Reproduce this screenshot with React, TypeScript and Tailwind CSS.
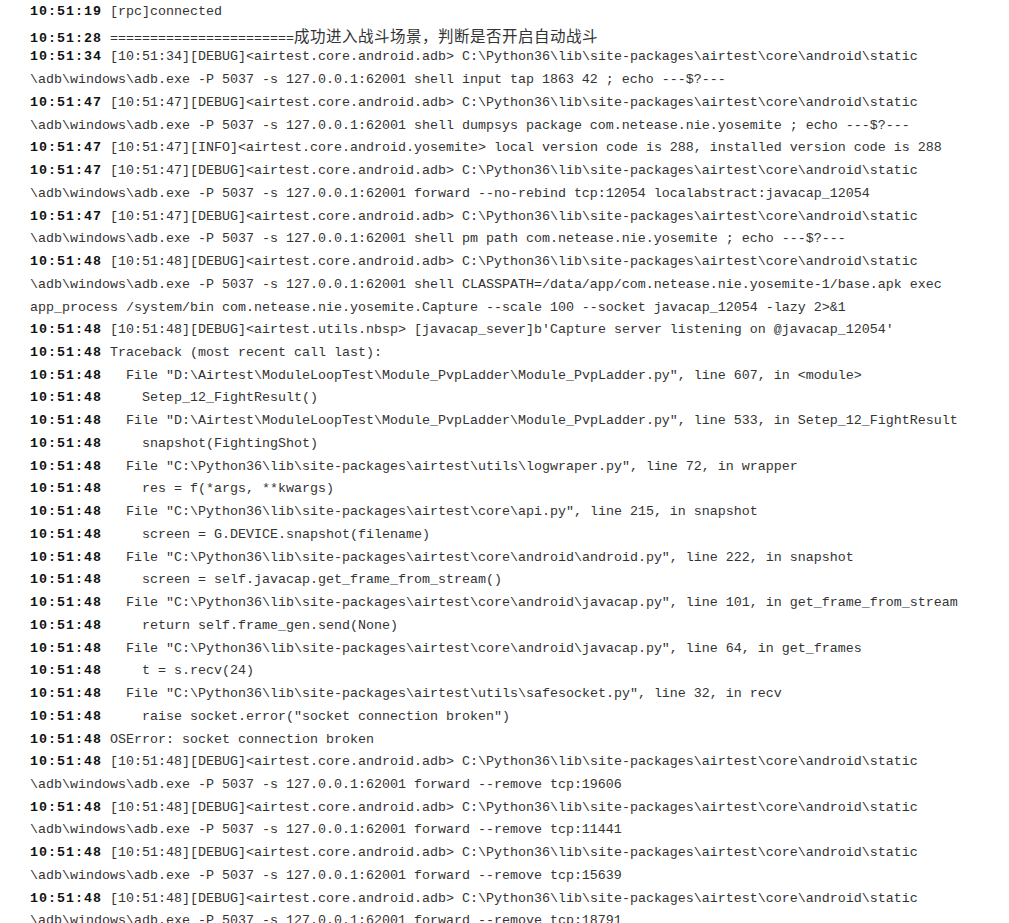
const ADB = "[DEBUG]<airtest.core.android.adb> C:\\Python36\\lib\\site-packages\\airtest\\core\\android\\static";
const SH = "\\adb\\windows\\adb.exe -P 5037 -s 127.0.0.1:62001 ";

type Entry = { time: string; lines: string[]; cjk?: string };

const entries: Entry[] = [
  { time: "10:51:19", lines: ["[rpc]connected"] },
  { time: "10:51:28", lines: ["======================="], cjk: "成功进入战斗场景，判断是否开启自动战斗" },
  { time: "10:51:34", lines: ["[10:51:34]" + ADB, SH + "shell input tap 1863 42 ; echo ---$?---"] },
  { time: "10:51:47", lines: ["[10:51:47]" + ADB, SH + "shell dumpsys package com.netease.nie.yosemite ; echo ---$?---"] },
  {
    time: "10:51:47",
    lines: ["[10:51:47][INFO]<airtest.core.android.yosemite> local version code is 288, installed version code is 288"],
  },
  { time: "10:51:47", lines: ["[10:51:47]" + ADB, SH + "forward --no-rebind tcp:12054 localabstract:javacap_12054"] },
  { time: "10:51:47", lines: ["[10:51:47]" + ADB, SH + "shell pm path com.netease.nie.yosemite ; echo ---$?---"] },
  {
    time: "10:51:48",
    lines: [
      "[10:51:48]" + ADB,
      SH + "shell CLASSPATH=/data/app/com.netease.nie.yosemite-1/base.apk exec",
      "app_process /system/bin com.netease.nie.yosemite.Capture --scale 100 --socket javacap_12054 -lazy 2>&1",
    ],
  },
  {
    time: "10:51:48",
    lines: ["[10:51:48][DEBUG]<airtest.utils.nbsp> [javacap_sever]b'Capture server listening on @javacap_12054'"],
  },
  { time: "10:51:48", lines: ["Traceback (most recent call last):"] },
  { time: "10:51:48", lines: ['  File "D:\\Airtest\\ModuleLoopTest\\Module_PvpLadder\\Module_PvpLadder.py", line 607, in <module>'] },
  { time: "10:51:48", lines: ["    Setep_12_FightResult()"] },
  {
    time: "10:51:48",
    lines: ['  File "D:\\Airtest\\ModuleLoopTest\\Module_PvpLadder\\Module_PvpLadder.py", line 533, in Setep_12_FightResult'],
  },
  { time: "10:51:48", lines: ["    snapshot(FightingShot)"] },
  { time: "10:51:48", lines: ['  File "C:\\Python36\\lib\\site-packages\\airtest\\utils\\logwraper.py", line 72, in wrapper'] },
  { time: "10:51:48", lines: ["    res = f(*args, **kwargs)"] },
  { time: "10:51:48", lines: ['  File "C:\\Python36\\lib\\site-packages\\airtest\\core\\api.py", line 215, in snapshot'] },
  { time: "10:51:48", lines: ["    screen = G.DEVICE.snapshot(filename)"] },
  {
    time: "10:51:48",
    lines: ['  File "C:\\Python36\\lib\\site-packages\\airtest\\core\\android\\android.py", line 222, in snapshot'],
  },
  { time: "10:51:48", lines: ["    screen = self.javacap.get_frame_from_stream()"] },
  {
    time: "10:51:48",
    lines: ['  File "C:\\Python36\\lib\\site-packages\\airtest\\core\\android\\javacap.py", line 101, in get_frame_from_stream'],
  },
  { time: "10:51:48", lines: ["    return self.frame_gen.send(None)"] },
  {
    time: "10:51:48",
    lines: ['  File "C:\\Python36\\lib\\site-packages\\airtest\\core\\android\\javacap.py", line 64, in get_frames'],
  },
  { time: "10:51:48", lines: ["    t = s.recv(24)"] },
  { time: "10:51:48", lines: ['  File "C:\\Python36\\lib\\site-packages\\airtest\\utils\\safesocket.py", line 32, in recv'] },
  { time: "10:51:48", lines: ['    raise socket.error("socket connection broken")'] },
  { time: "10:51:48", lines: ["OSError: socket connection broken"] },
  { time: "10:51:48", lines: ["[10:51:48]" + ADB, SH + "forward --remove tcp:19606"] },
  { time: "10:51:48", lines: ["[10:51:48]" + ADB, SH + "forward --remove tcp:11441"] },
  { time: "10:51:48", lines: ["[10:51:48]" + ADB, SH + "forward --remove tcp:15639"] },
  { time: "10:51:48", lines: ["[10:51:48]" + ADB, SH + "forward --remove tcp:18791"] },
];

export default function App() {
  return (
    <div className="h-[923px] w-[1009px] overflow-hidden bg-white pl-[30px] pt-[1px] font-['Liberation_Mono','Noto_Sans_CJK_SC',monospace] text-[13.33px] leading-[22.74px] text-[#333]">
      {entries.map((entry, idx) => (
        <div key={idx}>
          {entry.lines.map((line, i) => (
            <div key={i} className="h-[22.74px] whitespace-pre">
              {i === 0 && (
                <>
                  <span className="font-bold tracking-[1px] text-[#111]">{entry.time}</span>{" "}
                </>
              )}
              {line}
              {i === 0 && entry.cjk && (
                <span className="font-['Noto_Sans_CJK_SC',sans-serif] text-[15.5px] tracking-[0.5px]">{entry.cjk}</span>
              )}
            </div>
          ))}
        </div>
      ))}
    </div>
  );
}
